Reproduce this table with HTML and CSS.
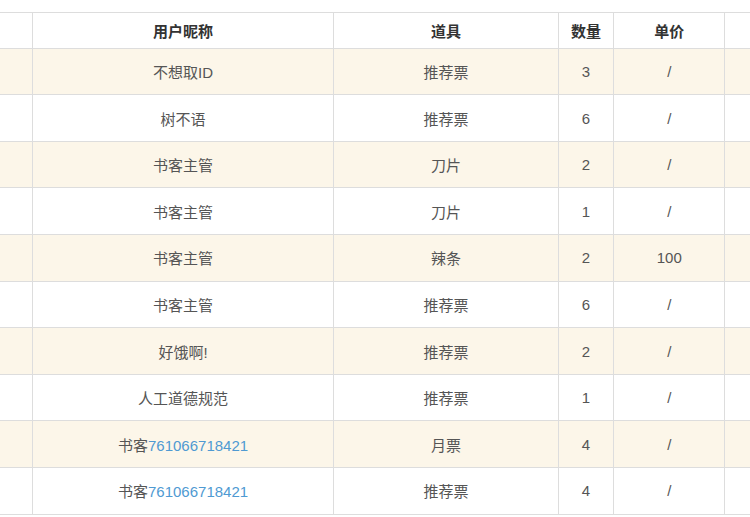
FILE: index.html
```html
<!DOCTYPE html>
<html lang="zh">
<head>
<meta charset="utf-8">
<link rel="stylesheet" href="styles.css">
</head>
<body>
<div class="wrap">
<table class="grid">
<colgroup>
<col class="c0"><col class="c1"><col class="c2"><col class="c3"><col class="c4"><col class="c5">
</colgroup>
<thead>
<tr><th></th><th>用户昵称</th><th>道具</th><th>数量</th><th>单价</th><th></th></tr>
</thead>
<tbody>
<tr class="odd"><td></td><td>不想取ID</td><td>推荐票</td><td>3</td><td>/</td><td></td></tr>
<tr><td></td><td>树不语</td><td>推荐票</td><td>6</td><td>/</td><td></td></tr>
<tr class="odd"><td></td><td>书客主管</td><td>刀片</td><td>2</td><td>/</td><td></td></tr>
<tr><td></td><td>书客主管</td><td>刀片</td><td>1</td><td>/</td><td></td></tr>
<tr class="odd"><td></td><td>书客主管</td><td>辣条</td><td>2</td><td>100</td><td></td></tr>
<tr><td></td><td>书客主管</td><td>推荐票</td><td>6</td><td>/</td><td></td></tr>
<tr class="odd"><td></td><td>好饿啊!</td><td>推荐票</td><td>2</td><td>/</td><td></td></tr>
<tr><td></td><td>人工道德规范</td><td>推荐票</td><td>1</td><td>/</td><td></td></tr>
<tr class="odd"><td></td><td>书客<a class="uid">761066718421</a></td><td>月票</td><td>4</td><td>/</td><td></td></tr>
<tr><td></td><td>书客<a class="uid">761066718421</a></td><td>推荐票</td><td>4</td><td>/</td><td></td></tr>
</tbody>
</table>
</div>
</body>
</html>
```
FILE: styles.css
```css
html, body {
  margin: 0;
  padding: 0;
  background: #ffffff;
  overflow: hidden;
}
.wrap {
  width: 750px;
  height: 517px;
  overflow: hidden;
  padding-top: 12px;
  box-sizing: border-box;
}
.grid {
  border-collapse: collapse;
  table-layout: fixed;
  width: 872.6px;
  margin-left: -48.3px;
  font-family: "Liberation Sans", "Noto Sans CJK SC", sans-serif;
  font-size: 15px;
  color: #555555;
}
.c0 { width: 80px; }
.c1 { width: 301.7px; }
.c2 { width: 224.3px; }
.c3 { width: 55.6px; }
.c4 { width: 111px; }
.c5 { width: 100px; }
.grid th, .grid td {
  border: 1px solid #dddddd;
  padding: 0;
  text-align: center;
  vertical-align: middle;
}
.grid th {
  height: 34.7px;
  font-weight: bold;
  color: #333333;
}
.grid td {
  height: 45.6px;
}
.grid tr.odd td {
  background: #fcf6e9;
}
.uid {
  color: #4f9ad2;
  text-decoration: none;
}
```
